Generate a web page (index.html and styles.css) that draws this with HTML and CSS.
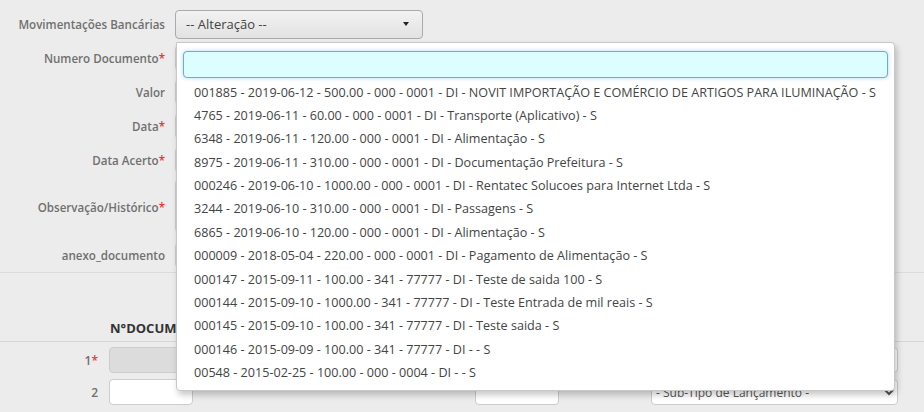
FILE: index.html
```html
<!DOCTYPE html>
<html lang="pt-BR">
<head>
    <meta charset="UTF-8">
    <title>Movimentações Bancárias</title>
    <link rel="stylesheet" href="styles.css">
</head>
<body>
    <form class="form">
        <div class="row">
            <label class="lbl">Movimentações Bancárias</label>
            <div class="field">
                <div class="chosen">
                    <span>-- Alteração --</span>
                    <b class="caret"></b>
                </div>
                <div class="drop">
                    <input class="search" type="text" value="">
                    <ul class="results">
                        <li>001885 - 2019-06-12 - 500.00 - 000 - 0001 - DI - NOVIT IMPORTAÇÃO E COMÉRCIO DE ARTIGOS PARA ILUMINAÇÃO - S</li>
                        <li>4765 - 2019-06-11 - 60.00 - 000 - 0001 - DI - Transporte (Aplicativo) - S</li>
                        <li>6348 - 2019-06-11 - 120.00 - 000 - 0001 - DI - Alimentação - S</li>
                        <li>8975 - 2019-06-11 - 310.00 - 000 - 0001 - DI - Documentação Prefeitura - S</li>
                        <li>000246 - 2019-06-10 - 1000.00 - 000 - 0001 - DI - Rentatec Solucoes para Internet Ltda - S</li>
                        <li>3244 - 2019-06-10 - 310.00 - 000 - 0001 - DI - Passagens - S</li>
                        <li>6865 - 2019-06-10 - 120.00 - 000 - 0001 - DI - Alimentação - S</li>
                        <li>000009 - 2018-05-04 - 220.00 - 000 - 0001 - DI - Pagamento de Alimentação - S</li>
                        <li>000147 - 2015-09-11 - 100.00 - 341 - 77777 - DI - Teste de saida 100 - S</li>
                        <li>000144 - 2015-09-10 - 1000.00 - 341 - 77777 - DI - Teste Entrada de mil reais - S</li>
                        <li>000145 - 2015-09-10 - 100.00 - 341 - 77777 - DI - Teste saida - S</li>
                        <li>000146 - 2015-09-09 - 100.00 - 341 - 77777 - DI - - S</li>
                        <li>00548 - 2015-02-25 - 100.00 - 000 - 0004 - DI - - S</li>
                    </ul>
                </div>
            </div>
        </div>
        <div class="row">
            <label class="lbl">Numero Documento<i>*</i></label>
            <div class="field"><input class="inp" type="text"></div>
        </div>
        <div class="row">
            <label class="lbl">Valor</label>
            <div class="field"><input class="inp" type="text"></div>
        </div>
        <div class="row">
            <label class="lbl">Data<i>*</i></label>
            <div class="field"><input class="inp" type="text"></div>
        </div>
        <div class="row">
            <label class="lbl">Data Acerto<i>*</i></label>
            <div class="field"><input class="inp" type="text"></div>
        </div>
        <div class="row tall">
            <label class="lbl">Observação/Histórico<i>*</i></label>
            <div class="field"><textarea class="inp area"></textarea></div>
        </div>
        <div class="row">
            <label class="lbl">anexo_documento</label>
            <div class="field"><input class="inp" type="text"></div>
        </div>
    </form>

    <div class="itens">
        <div class="head">
            <span class="num"></span>
            <span class="title">N°DOCUMENTO</span>
        </div>
        <div class="line first">
            <span class="num">1<i>*</i></span>
            <input class="cell grey wide" type="text" disabled>
            <input class="cell sel-w" type="text">
        </div>
        <div class="line">
            <span class="num">2</span>
            <input class="cell small" type="text">
            <input class="cell small mid" type="text">
            <select class="cell sel-w">
                <option>- Sub-Tipo de Lançamento -</option>
            </select>
        </div>
    </div>
</body>
</html>
```

FILE: styles.css
```css
body {
    margin: 0;
    background: #ececec;
    font-family: "Open Sans", "Liberation Sans", sans-serif;
    font-size: 13px;
    color: #444;
}

.form {
    padding-top: 7px;
    border-bottom: 1px solid #dcdcdc;
}

.row {
    display: flex;
    align-items: center;
    height: 34px;
}

.row.tall {
    height: 61px;
}

.lbl {
    width: 165px;
    text-align: right;
    font-size: 11.6px;
    font-weight: 600;
    color: #707070;
    flex-shrink: 0;
}

.lbl i, .num i {
    color: #e33;
    font-style: normal;
}

.field {
    position: relative;
    margin-left: 10px;
    width: 710px;
}

.chosen {
    width: 248px;
    height: 29px;
    box-sizing: border-box;
    border: 1px solid #aaa;
    border-radius: 4px;
    background: linear-gradient(#f2f2f2, #e2e2e2);
    display: flex;
    align-items: center;
    justify-content: space-between;
    padding: 0 10px;
    font-size: 13px;
    color: #444;
}

.caret {
    width: 0;
    height: 0;
    border-left: 3px solid transparent;
    border-right: 3px solid transparent;
    border-top: 4px solid #222;
    margin-right: 3px;
}

.inp {
    width: 100%;
    height: 26px;
    box-sizing: border-box;
    border: 1px solid #ccc;
    border-radius: 4px;
    background: #fff;
}

.area {
    height: 54px;
}

/* open dropdown */
.drop {
    position: absolute;
    top: 32px;
    left: 1px;
    width: 719px;
    height: 349px;
    box-sizing: border-box;
    background: #fff;
    border: 1px solid #c8c8c8;
    border-radius: 0 4px 4px 4px;
    box-shadow: 2px 4px 6px rgba(0, 0, 0, 0.22);
    padding: 8px 6px 0 6px;
    z-index: 10;
}

.search {
    display: block;
    width: 100%;
    height: 27px;
    box-sizing: border-box;
    background: #dcfefe;
    border: 1px solid #6fa8dc;
    border-radius: 4px;
    box-shadow: 0 0 4px rgba(82, 168, 236, 0.45);
    outline: none;
    padding: 0 6px;
    font-family: inherit;
    font-size: 13px;
    caret-color: #222;
}

.results {
    list-style: none;
    margin: 3px 0 0 0;
    padding: 0;
}

.results li {
    height: 23.4px;
    line-height: 23.4px;
    padding-left: 11px;
    white-space: nowrap;
    font-size: 12.6px;
    color: #444;
}

/* itens */
.itens {
    margin-top: 42px;
}

.head {
    display: flex;
    align-items: center;
    height: 26px;
    border-bottom: 1px solid #d6d6d6;
}

.num {
    width: 98px;
    text-align: right;
    font-size: 12px;
    font-weight: 600;
    color: #707070;
    flex-shrink: 0;
    margin-right: 11px;
}

.title {
    font-size: 13px;
    font-weight: 700;
    color: #333;
    margin-left: 1px;
}

.line {
    display: flex;
    align-items: center;
    height: 32px;
}

.line.first {
    margin-top: 2px;
}

.cell {
    height: 26px;
    box-sizing: border-box;
    border: 1px solid #ccc;
    border-radius: 4px;
    background: #fff;
    font-family: inherit;
    font-size: 12px;
    color: #555;
}

.grey {
    background: #dcdcdc;
}

.wide {
    width: 360px;
}

.small {
    width: 84px;
}

.mid {
    margin-left: 282px;
}

.sel-w {
    width: 247px;
    margin-left: auto;
    margin-right: 26px;
}
```
